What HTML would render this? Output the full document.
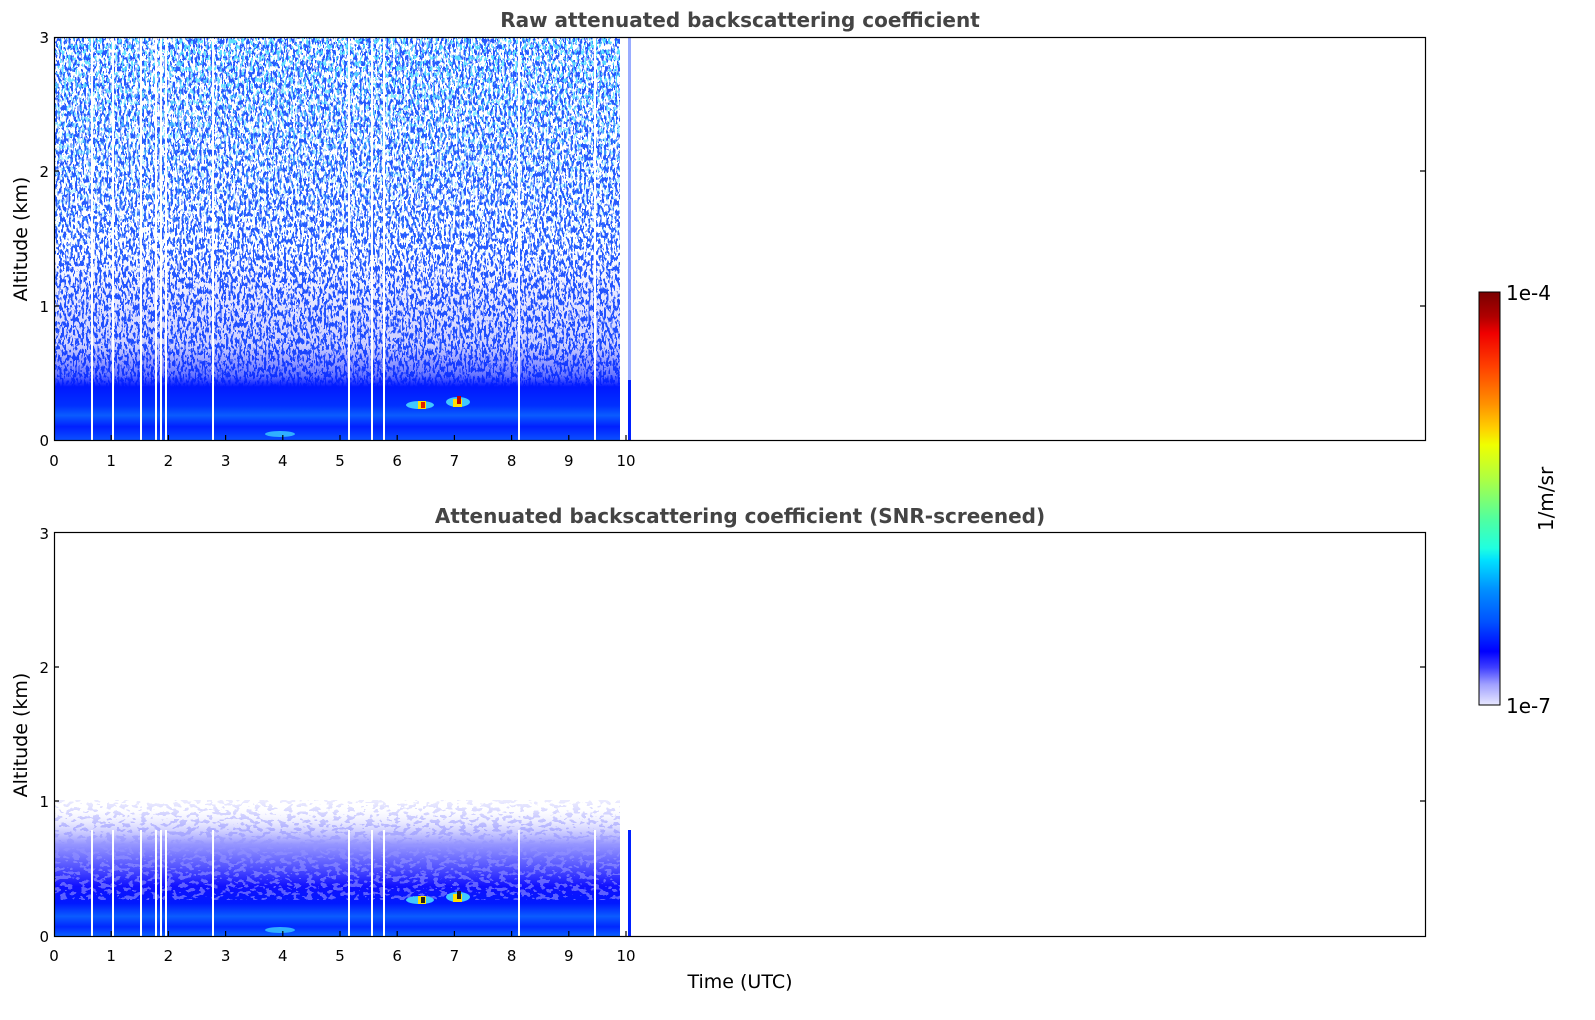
<!DOCTYPE html>
<html><head><meta charset="utf-8"><style>
html,body{margin:0;padding:0;background:#fff;}
svg{display:block;font-family:"DejaVu Sans","Liberation Sans",sans-serif;}
</style></head><body>
<svg width="1595" height="1020" viewBox="0 0 1595 1020" xmlns="http://www.w3.org/2000/svg">
<defs>
<filter id="nb" x="0" y="0" width="100%" height="100%" filterUnits="objectBoundingBox">
<feTurbulence type="fractalNoise" baseFrequency="0.45 0.18" numOctaves="2" seed="3"/>
<feColorMatrix type="matrix" values="0 0 0 0 0.02  0 0 0 0 0.1  0 0 0 0 1  5 0 0 0 -2.1"/>
<feComponentTransfer><feFuncA type="discrete" tableValues="0 1"/></feComponentTransfer>
</filter>
<filter id="nc" x="0" y="0" width="100%" height="100%" filterUnits="objectBoundingBox">
<feTurbulence type="fractalNoise" baseFrequency="0.45 0.18" numOctaves="2" seed="11"/>
<feColorMatrix type="matrix" values="0 0 0 0 0.1  0 0 0 0 0.75  0 0 0 0 1  5 0 0 0 -2.45"/>
<feComponentTransfer><feFuncA type="discrete" tableValues="0 1"/></feComponentTransfer>
</filter>
<filter id="nl" x="0" y="0" width="100%" height="100%" filterUnits="objectBoundingBox">
<feTurbulence type="fractalNoise" baseFrequency="0.15 0.25" numOctaves="2" seed="5"/>
<feColorMatrix type="matrix" values="0 0 0 0 0.3  0 0 0 0 0.3  0 0 0 0 1  5 0 0 0 -2.3"/>
<feComponentTransfer><feFuncA type="discrete" tableValues="0 1"/></feComponentTransfer>
</filter>
<linearGradient id="cyanfade" x1="0" y1="0" x2="0" y2="1">
<stop offset="0" stop-color="#fff" stop-opacity="1"/><stop offset="0.6" stop-color="#fff" stop-opacity="0"/>
</linearGradient>
<mask id="mcy"><rect x="54" y="37" width="577" height="403" fill="url(#cyanfade)"/></mask>
<linearGradient id="lfade" x1="0" y1="0" x2="0" y2="1">
<stop offset="0" stop-color="#fff" stop-opacity="0.3"/><stop offset="0.3" stop-color="#fff" stop-opacity="1"/><stop offset="1" stop-color="#fff" stop-opacity="1"/>
</linearGradient>
<mask id="ml"><rect x="54" y="800" width="577" height="100" fill="url(#lfade)"/></mask>
<linearGradient id="band" x1="0" y1="0" x2="0" y2="1">
<stop offset="0" stop-color="#0010ff" stop-opacity="0"/>
<stop offset="0.5" stop-color="#0010ff" stop-opacity="0.2"/>
<stop offset="0.66" stop-color="#0018ff" stop-opacity="0.6"/>
<stop offset="0.72" stop-color="#0018ff" stop-opacity="1"/>
<stop offset="0.82" stop-color="#0030ff" stop-opacity="1"/>
<stop offset="0.87" stop-color="#0a5cff" stop-opacity="1"/>
<stop offset="0.93" stop-color="#0020ff" stop-opacity="1"/>
<stop offset="1" stop-color="#0a50ff" stop-opacity="1"/>
</linearGradient>
<linearGradient id="band2" x1="0" y1="0" x2="0" y2="1">
<stop offset="0" stop-color="#fff" stop-opacity="0"/>
<stop offset="0.15" stop-color="#c8c8ff" stop-opacity="0.5"/>
<stop offset="0.3" stop-color="#8a8aff" stop-opacity="0.9"/>
<stop offset="0.5" stop-color="#4848ff" stop-opacity="1"/>
<stop offset="0.62" stop-color="#1010ff" stop-opacity="1"/>
<stop offset="0.75" stop-color="#0018ff" stop-opacity="1"/>
<stop offset="0.85" stop-color="#0a5cff" stop-opacity="1"/>
<stop offset="0.93" stop-color="#0028ff" stop-opacity="1"/>
<stop offset="1" stop-color="#0a60ff" stop-opacity="1"/>
</linearGradient>
<linearGradient id="cb" x1="0" y1="0" x2="0" y2="1">
<stop offset="0" stop-color="#7a0000"/><stop offset="0.06" stop-color="#b00000"/>
<stop offset="0.1" stop-color="#f00000"/><stop offset="0.18" stop-color="#ff4000"/>
<stop offset="0.27" stop-color="#ff9000"/><stop offset="0.33" stop-color="#ffd000"/>
<stop offset="0.37" stop-color="#f0ff00"/><stop offset="0.45" stop-color="#b0ff40"/>
<stop offset="0.55" stop-color="#50ffa0"/><stop offset="0.62" stop-color="#20ffe0"/>
<stop offset="0.65" stop-color="#00e0ff"/><stop offset="0.72" stop-color="#0090ff"/>
<stop offset="0.8" stop-color="#0050ff"/><stop offset="0.87" stop-color="#0000ff"/>
<stop offset="0.91" stop-color="#4040ff"/><stop offset="0.95" stop-color="#a0a0ff"/>
<stop offset="1" stop-color="#e8e8ff"/>
</linearGradient>
</defs>

<rect x="54" y="37" width="566" height="403" filter="url(#nb)"/>
<g mask="url(#mcy)"><rect x="54" y="37" width="566" height="403" filter="url(#nc)"/></g>
<rect x="54" y="250" width="566" height="190" fill="url(#band)"/>
<rect x="628" y="37" width="3" height="403" fill="#0030ff" opacity="0.4"/>
<rect x="628" y="380" width="3" height="60" fill="#0020ff"/>
<ellipse cx="420" cy="405" rx="14" ry="4" fill="#40c8ff"/>
<ellipse cx="458" cy="402" rx="12" ry="5" fill="#40c8ff"/>
<rect x="418" y="401" width="8" height="8" fill="#ffe000"/>
<rect x="421" y="402" width="4" height="6" fill="#e02000"/>
<rect x="453" y="399" width="9" height="8" fill="#ffe000"/>
<rect x="457" y="396" width="4" height="8" fill="#c00000"/>
<ellipse cx="280" cy="434" rx="15" ry="3" fill="#30b0ff"/>
<g fill="#fff">
<rect x="91" y="37" width="2" height="403"/><rect x="112" y="37" width="2" height="403"/>
<rect x="140" y="37" width="2" height="403"/><rect x="155" y="37" width="2" height="403"/>
<rect x="160" y="37" width="2" height="403"/><rect x="165" y="37" width="2" height="403"/>
<rect x="212" y="37" width="2" height="403"/><rect x="348" y="37" width="2" height="403"/>
<rect x="371" y="37" width="2" height="403"/><rect x="383" y="37" width="2" height="403"/>
<rect x="518" y="37" width="2" height="403"/><rect x="594" y="37" width="2" height="403"/>
<rect x="620" y="37" width="8" height="403"/>
</g>

<rect x="54" y="805" width="566" height="131" fill="url(#band2)"/>
<g mask="url(#ml)"><rect x="54" y="800" width="566" height="100" filter="url(#nl)" opacity="0.6"/></g>
<rect x="628" y="830" width="3" height="106" fill="#0020ff"/>
<ellipse cx="420" cy="900" rx="14" ry="4" fill="#40c8ff"/>
<ellipse cx="458" cy="897" rx="12" ry="5" fill="#40c8ff"/>
<rect x="418" y="896" width="8" height="8" fill="#ffe000"/>
<rect x="421" y="897" width="4" height="6" fill="#202020"/>
<rect x="453" y="894" width="9" height="8" fill="#ffe000"/>
<rect x="457" y="891" width="4" height="8" fill="#202020"/>
<ellipse cx="280" cy="930" rx="15" ry="3" fill="#30b0ff"/>
<g fill="#fff">
<rect x="91" y="830" width="2" height="106"/><rect x="112" y="830" width="2" height="106"/>
<rect x="140" y="830" width="2" height="106"/><rect x="155" y="830" width="2" height="106"/>
<rect x="160" y="830" width="2" height="106"/><rect x="165" y="830" width="2" height="106"/>
<rect x="212" y="830" width="2" height="106"/><rect x="348" y="830" width="2" height="106"/>
<rect x="371" y="830" width="2" height="106"/><rect x="383" y="830" width="2" height="106"/>
<rect x="518" y="830" width="2" height="106"/><rect x="594" y="830" width="2" height="106"/>
<rect x="620" y="805" width="8" height="131"/>
</g>

<g fill="none" stroke="#000" stroke-width="1.2">
<rect x="54.5" y="37.5" width="1371" height="403"/>
<rect x="54.5" y="532.5" width="1371" height="404"/>
<path d="M54 306h5M54 171h5M1425 306h-5M1425 171h-5M54 801h5M54 667h5M1425 801h-5M1425 667h-5"/>
<path d="M111.2 440v-5M168.4 440v-5M225.6 440v-5M282.8 440v-5M340 440v-5M397.2 440v-5M454.4 440v-5M511.6 440v-5M568.8 440v-5M626 440v-5"/>
<path d="M111.2 936v-5M168.4 936v-5M225.6 936v-5M282.8 936v-5M340 936v-5M397.2 936v-5M454.4 936v-5M511.6 936v-5M568.8 936v-5M626 936v-5"/>
</g>

<g font-size="15" fill="#000">
<g text-anchor="end">
<text x="49" y="446">0</text><text x="49" y="312">1</text><text x="49" y="177">2</text><text x="49" y="43">3</text>
<text x="49" y="942">0</text><text x="49" y="807">1</text><text x="49" y="673">2</text><text x="49" y="539">3</text>
</g>
<g text-anchor="middle">
<text x="54" y="466">0</text><text x="111.2" y="466">1</text><text x="168.4" y="466">2</text><text x="225.6" y="466">3</text><text x="282.8" y="466">4</text><text x="340" y="466">5</text><text x="397.2" y="466">6</text><text x="454.4" y="466">7</text><text x="511.6" y="466">8</text><text x="568.8" y="466">9</text><text x="626" y="466">10</text>
<text x="54" y="961">0</text><text x="111.2" y="961">1</text><text x="168.4" y="961">2</text><text x="225.6" y="961">3</text><text x="282.8" y="961">4</text><text x="340" y="961">5</text><text x="397.2" y="961">6</text><text x="454.4" y="961">7</text><text x="511.6" y="961">8</text><text x="568.8" y="961">9</text><text x="626" y="961">10</text>
</g>
</g>
<g font-size="19" fill="#000" text-anchor="middle">
<text x="740" y="988">Time (UTC)</text>
<text transform="translate(27 239) rotate(-90)">Altitude (km)</text>
<text transform="translate(27 735) rotate(-90)">Altitude (km)</text>
</g>
<g font-size="20" font-weight="bold" fill="#444" text-anchor="middle">
<text x="740" y="27">Raw attenuated backscattering coefficient</text>
<text x="740" y="523">Attenuated backscattering coefficient (SNR-screened)</text>
</g>

<rect x="1479" y="292" width="21" height="413" fill="url(#cb)" stroke="#000" stroke-width="1"/>
<g font-size="20" fill="#000">
<text x="1506" y="300">1e-4</text>
<text x="1506" y="713">1e-7</text>
<text transform="translate(1553 499) rotate(-90)" text-anchor="middle">1/m/sr</text>
</g>
</svg>
</body></html>
